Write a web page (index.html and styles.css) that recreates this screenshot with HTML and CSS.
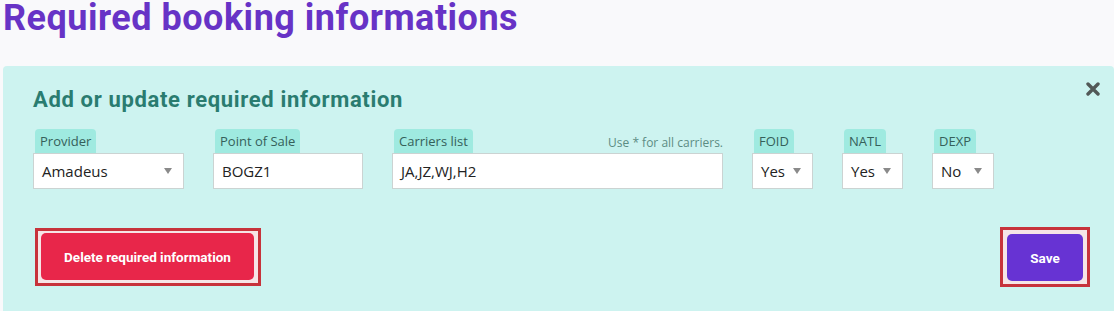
FILE: index.html
```html
<!DOCTYPE html>
<html>
<head>
<meta charset="utf-8">
<link rel="stylesheet" href="styles.css">
</head>
<body>
<h1 class="page-title">Required booking informations</h1>
<section class="panel">
  <div class="panel-head">
    <h2 class="panel-title">Add or update required information</h2>
    <svg class="close" width="14" height="14" viewBox="0 0 14 14"><path d="M2 2 L12 12 M12 2 L2 12" stroke="#525857" stroke-width="3.4" stroke-linecap="round"/></svg>
  </div>
  <div class="fields">
    <div class="field w-provider">
      <div class="label-row"><span class="tag">Provider</span></div>
      <div class="control select"><span>Amadeus</span><i class="caret"></i></div>
    </div>
    <div class="field w-pos">
      <div class="label-row"><span class="tag">Point of Sale</span></div>
      <div class="control"><span>BOGZ1</span></div>
    </div>
    <div class="field w-carriers">
      <div class="label-row"><span class="tag">Carriers list</span><span class="hint">Use * for all carriers.</span></div>
      <div class="control"><span>JA,JZ,WJ,H2</span></div>
    </div>
    <div class="field w-small">
      <div class="label-row"><span class="tag">FOID</span></div>
      <div class="control select"><span>Yes</span><i class="caret"></i></div>
    </div>
    <div class="field w-small">
      <div class="label-row"><span class="tag">NATL</span></div>
      <div class="control select"><span>Yes</span><i class="caret"></i></div>
    </div>
    <div class="field w-small2">
      <div class="label-row"><span class="tag">DEXP</span></div>
      <div class="control select"><span>No</span><i class="caret"></i></div>
    </div>
  </div>
  <div class="actions">
    <span class="hl hl-delete"><button class="btn btn-delete">Delete required information</button></span>
    <span class="hl hl-save"><button class="btn btn-save">Save</button></span>
  </div>
</section>
</body>
</html>
```

FILE: styles.css
```css
html, body {
  margin: 0;
  padding: 0;
  background: #f9f9fb;
  overflow: hidden;
}
body {
  padding: 0 0 0 3px;
  font-family: "Open Sans", "Noto Sans", sans-serif;
}
.page-title {
  margin: 0;
  height: 66px;
  font-family: Roboto, "Liberation Sans", sans-serif;
  font-weight: 700;
  font-size: 36px;
  line-height: 36px;
  color: #6733c6;
  letter-spacing: 0.5px;
}
.panel {
  box-sizing: border-box;
  background: #cdf3f0;
  border-radius: 4px 4px 0 0;
  height: 245px;
  padding: 16px 14px 0 30px;
}
.panel-head {
  display: flex;
  justify-content: space-between;
  align-items: flex-start;
}
.panel-title {
  margin: 0;
  padding-top: 3px;
  font-family: Roboto, "Liberation Sans", sans-serif;
  font-weight: 700;
  font-size: 22px;
  line-height: 30px;
  letter-spacing: 0.65px;
  color: #2a7c70;
}
.close {
  display: block;
  margin-top: 0;
}
.fields {
  display: flex;
  gap: 29px;
  margin-top: 14px;
}
.field {
  display: flex;
  flex-direction: column;
}
.w-provider { width: 151px; }
.w-pos { width: 150px; }
.w-carriers { width: 331px; }
.w-small { width: 61px; }
.w-small2 { width: 62px; }
.label-row {
  display: flex;
  justify-content: space-between;
  align-items: flex-end;
  height: 24px;
}
.tag {
  margin-left: 2px;
  background: #9feae0;
  border-radius: 4px 4px 0 0;
  padding: 0 5px;
  height: 24px;
  line-height: 24px;
  font-size: 13px;
  color: #35605a;
}
.hint {
  font-size: 12px;
  color: #5c8c83;
  line-height: 20px;
}
.control {
  box-sizing: border-box;
  height: 36px;
  background: #fff;
  border: 1px solid #cbd3d2;
  padding: 0 8px;
  display: flex;
  align-items: center;
  justify-content: space-between;
  font-size: 15px;
  color: #222;
}
.caret {
  width: 0;
  height: 0;
  border-left: 4px solid transparent;
  border-right: 4px solid transparent;
  border-top: 6px solid #8a8a8a;
  margin-right: 3px;
}
.actions {
  display: flex;
  justify-content: space-between;
  align-items: center;
  margin-top: 38px;
  padding: 0 10px 0 2px;
}
.hl {
  display: flex;
  border: 3px solid #c7323b;
  background: #f6e4e6;
}
.hl-delete { padding: 2px 4px 3px 3px; }
.hl-save { padding: 4px 4px 3px 4px; }
.btn {
  border: none;
  border-radius: 5px;
  height: 47px;
  color: #fff;
  font-family: Roboto, "Liberation Sans", sans-serif;
  font-weight: 700;
  font-size: 13.5px;
  cursor: pointer;
}
.btn-delete {
  width: 213px;
  background: #e8264a;
}
.btn-save {
  width: 76px;
  background: #6733d3;
}
```
